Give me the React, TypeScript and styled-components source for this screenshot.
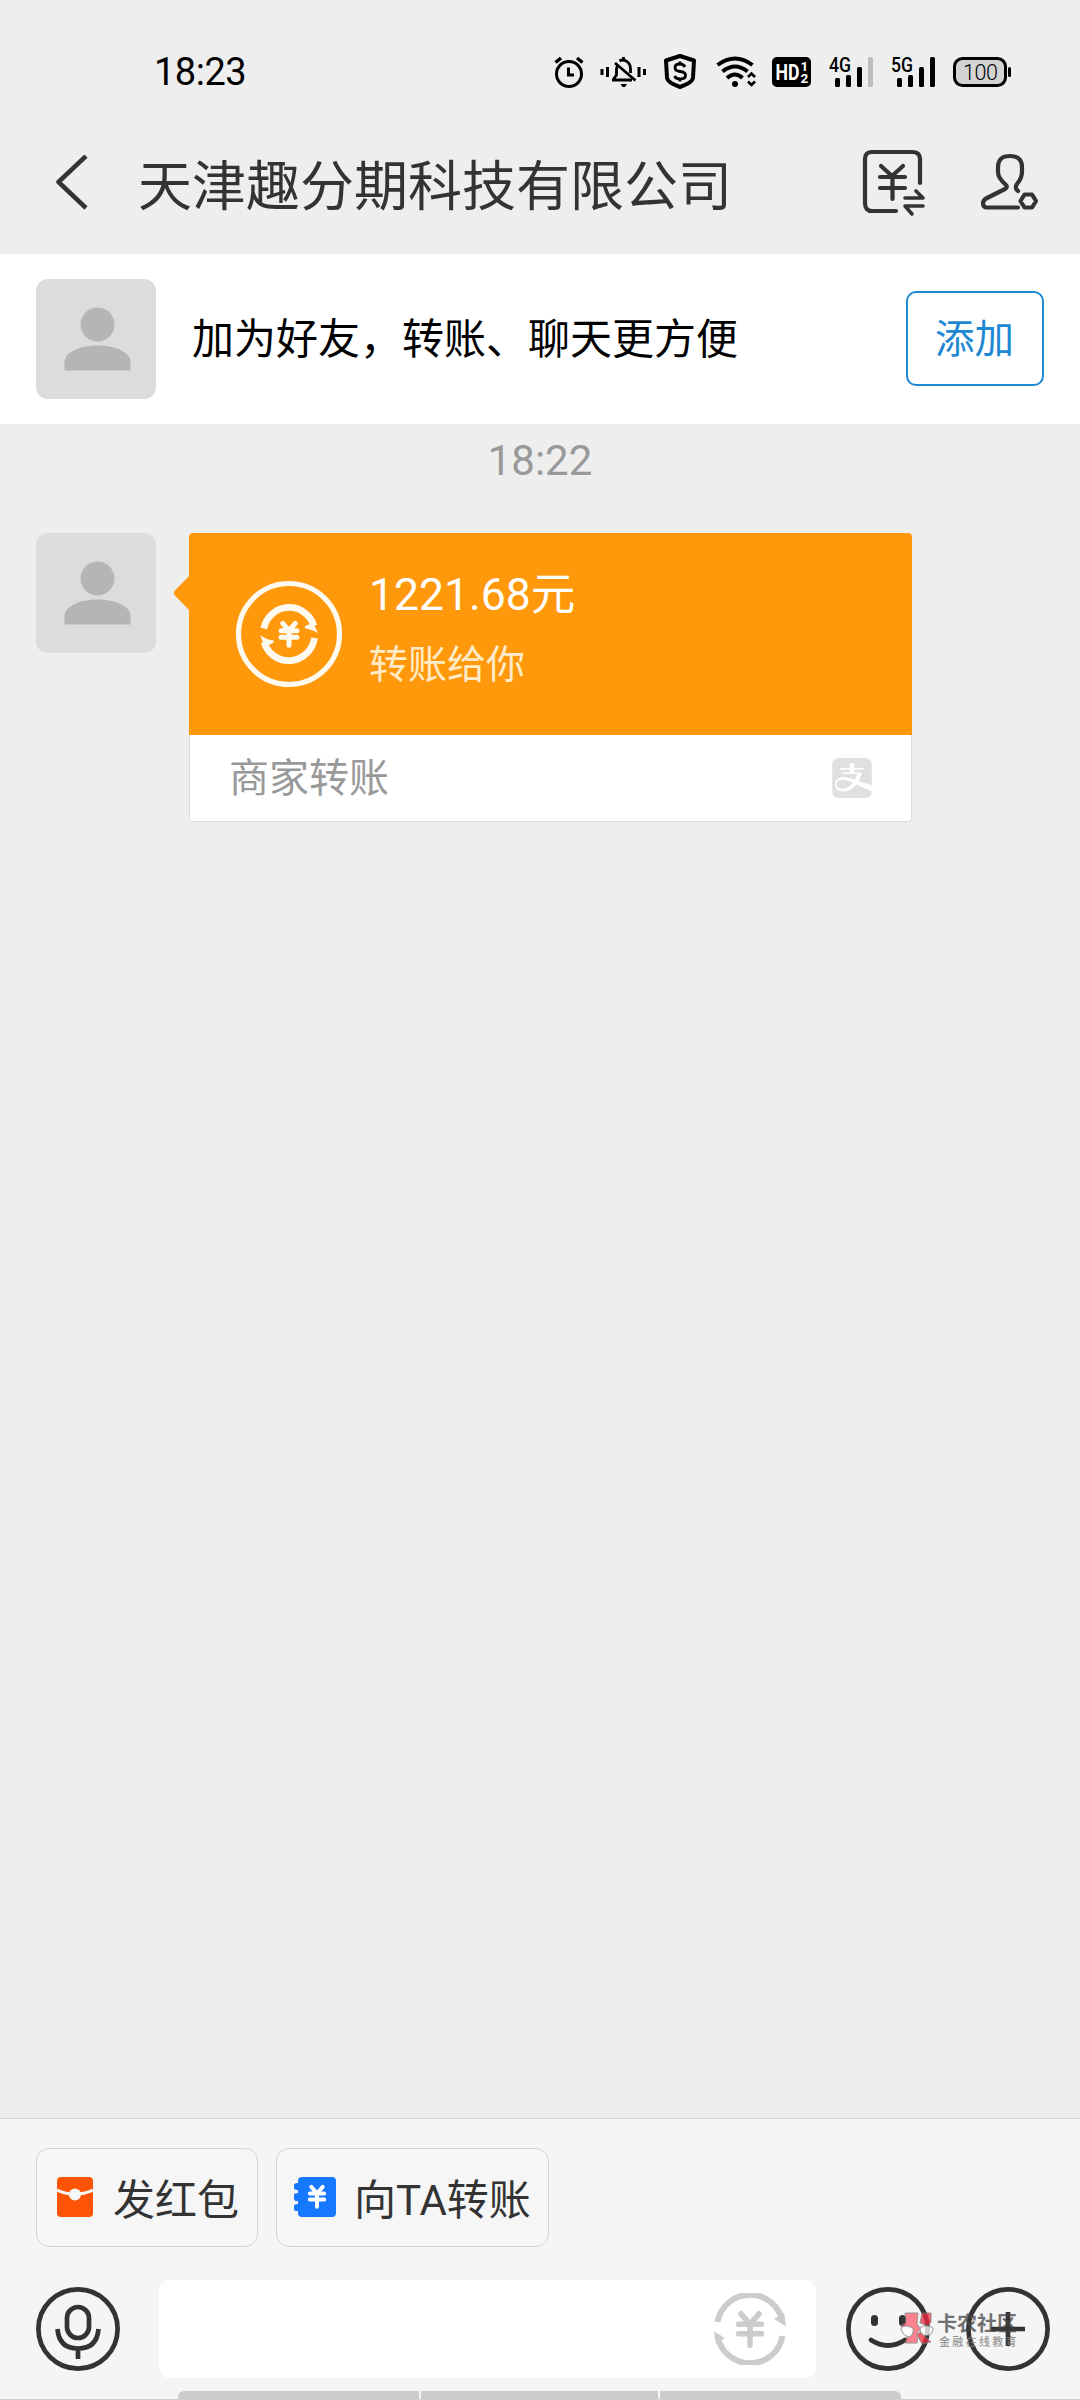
import React from "react";
import styled, { createGlobalStyle } from "styled-components";
import { SiAlipay } from "react-icons/si";

const GlobalStyle = createGlobalStyle`
  * { box-sizing: border-box; }
  html, body { margin: 0; padding: 0; background: #eeeeee; }
  body { font-family: Roboto, "Noto Sans CJK SC", sans-serif; }
  svg { display: block; flex: none; }
`;

const Screen = styled.div`
  width: 1080px;
  height: 2400px;
  overflow: hidden;
  display: flex;
  flex-direction: column;
  background: #eeeeee;
`;

const StatusBar = styled.header`
  height: 112px;
  flex: none;
  display: flex;
  align-items: center;
  padding: 34px 68px 0 154px;
`;

const Clock = styled.span`
  flex: 1;
  margin-top: -2px;
  font-family: Roboto, sans-serif;
  font-size: 38px;
  line-height: 44px;
  letter-spacing: -0.5px;
  color: #000;
`;

const StatusIcons = styled.div`
  display: flex;
  align-items: center;
`;

const StatusIcon = styled.svg<{ $gap?: number }>`
  height: 40px;
  margin-left: ${(p) => p.$gap ?? 0}px;
  overflow: visible;
`;

const NavBar = styled.nav`
  height: 142px;
  flex: none;
  display: flex;
  align-items: center;
  padding: 0 39px 0 53px;
`;

const Title = styled.h1`
  flex: 1;
  margin: 9px 0 0 49px;
  font-size: 54px;
  line-height: 80px;
  font-weight: 400;
  color: #333;
  white-space: nowrap;
`;

const NavActions = styled.div`
  display: flex;
  align-items: flex-start;
  gap: 52px;
`;

const FriendBar = styled.section`
  height: 170px;
  flex: none;
  display: flex;
  align-items: center;
  padding: 0 36px;
  background: #fff;
`;

const AvatarBox = styled.div`
  width: 120px;
  height: 120px;
  flex: none;
  border-radius: 12px;
  background: #dcdcdc;
`;

const FriendText = styled.p`
  flex: 1;
  margin: 2px 0 0 36px;
  font-size: 42px;
  line-height: 60px;
  font-weight: 400;
  color: #000;
`;

const AddButton = styled.button`
  width: 138px;
  height: 95px;
  margin-bottom: 1px;
  padding: 0 1px 5px 0;
  border: 2px solid #1e88d2;
  border-radius: 10px;
  background: #fff;
  color: #1e88d2;
  font: 400 39.5px/60px "Noto Sans CJK SC", sans-serif;
`;

const Chat = styled.main`
  flex: 1;
  display: flex;
  flex-direction: column;
`;

const TimeStamp = styled.time`
  align-self: center;
  margin-top: 11px;
  height: 98px;
  font-size: 42px;
  line-height: 52px;
  color: #999;
`;

const MessageRow = styled.div`
  display: flex;
  align-items: flex-start;
  padding-left: 36px;
`;

const Tail = styled.svg`
  margin: 43px 0 0 17px;
`;

const Card = styled.article`
  width: 723px;
  border-radius: 4px;
  overflow: hidden;
`;

const CardTop = styled.div`
  height: 202px;
  display: flex;
  align-items: center;
  padding-left: 46px;
  background: #ff980a;
`;

const CardTexts = styled.div`
  margin: -7px 0 0 26px;
`;

const Amount = styled.div`
  font-size: 44.5px;
  line-height: 69px;
  color: #fff;
`;

const Note = styled.div`
  font-size: 39px;
  line-height: 71px;
  color: #ffebc8;
`;

const CardFoot = styled.div`
  height: 87px;
  display: flex;
  align-items: center;
  justify-content: space-between;
  padding: 0 39px 1px 39px;
  background: #fff;
  border: 1px solid #d9d9d9;
  border-top: 0;
  border-radius: 0 0 4px 4px;
  font-size: 40px;
  line-height: 60px;
  color: #999;
`;

const FootLabel = styled.span`
  margin-top: 2px;
`;

const Composer = styled.footer`
  position: relative;
  height: 282px;
  flex: none;
  display: flex;
  flex-direction: column;
  background: #f5f5f5;
  border-top: 1px solid #d4d4d4;
`;

const QuickRow = styled.div`
  display: flex;
  gap: 18px;
  padding: 29px 36px 0;
`;

const QuickButton = styled.button<{ $width: number; $pad: number; $gap: number }>`
  width: ${(p) => p.$width}px;
  height: 99px;
  display: flex;
  align-items: center;
  gap: ${(p) => p.$gap}px;
  padding: 0 0 1px ${(p) => p.$pad}px;
  border: 1px solid #d4d4d4;
  border-radius: 13px;
  background: #f6f6f6;
  color: #333;
  font: 400 42px/60px Roboto, "Noto Sans CJK SC", sans-serif;
  white-space: nowrap;
`;

const QuickLabel = styled.span`
  margin-top: 7px;
`;

const InputRow = styled.div`
  display: flex;
  align-items: center;
  padding: 33px 30px 0 36px;
`;

const InputField = styled.div`
  width: 657px;
  height: 98px;
  margin: 0 30px 0 39px;
  display: flex;
  align-items: center;
  justify-content: flex-end;
  padding-right: 30px;
  border-radius: 11px;
  background: #fff;
`;

const PlusWrap = styled.div`
  margin: 0 0 1px 36px;
`;

const BottomStrip = styled.div`
  margin-top: auto;
  height: 9px;
  display: flex;
  gap: 2px;
  padding: 0 179px 0 178px;
  border-bottom: 1px solid #d0d0d0;
`;

const StripPart = styled.div<{ $width: number }>`
  width: ${(p) => p.$width}px;
  background: #cccccc;
  &:first-child { border-top-left-radius: 6px; }
  &:last-child { border-top-right-radius: 6px; }
`;

const Watermark = styled.div`
  position: absolute;
  left: 900px;
  top: 192px;
  display: flex;
  gap: 3px;
  opacity: 0.75;
`;

const MarkTitle = styled.div`
  font: 700 20px/24px "Noto Sans CJK SC", sans-serif;
  color: #444;
`;

const MarkSub = styled.div`
  margin: -2px 0 0 2px;
  font: 500 11px/16px "Noto Sans CJK SC", sans-serif;
  letter-spacing: 2.3px;
  color: #777;
`;

const Avatar = () => (
  <AvatarBox>
    <svg width="120" height="120" fill="#b5b5b5">
      <circle cx="61.5" cy="45.5" r="17" />
      <path d="M28.5 91.500V83C28.500 73 44 66.500 61.500 66.500S94.500 73 94.500 83V91.500Z" />
    </svg>
  </AvatarBox>
);

const Yen = ({ x, y, s, w, color }: { x: number; y: number; s: number; w: number; color: string }) => (
  <path
    transform={`translate(${x} ${y}) scale(${s})`}
    d="M-9.500-16L0-5L9.500-16M-12-5H12M-12 5H12M0-5V17"
    fill="none"
    stroke={color}
    strokeWidth={w / s}
    strokeLinecap="round"
    strokeLinejoin="round"
  />
);

const Signal = ({ label, weak, gap }: { label: string; weak?: boolean; gap: number }) => (
  <StatusIcon $gap={gap} width="45" viewBox="0 0 45 40">
    <text x="0" y="18.500" fontFamily="Roboto, sans-serif" fontSize="20.500" fontWeight="500" textLength="22" lengthAdjust="spacingAndGlyphs">{label}</text>
    <rect x="6" y="25" width="5" height="9" rx="1.500" />
    <rect x="17" y="22" width="5" height="12" rx="1.500" />
    <rect x="28" y="14" width="5" height="20" rx="1.500" />
    <rect x="39" y="4" width="5" height="30" rx="1.500" fill={weak ? "#bdbdbd" : "#000"} />
  </StatusIcon>
);

const SignalIcons = () => (
  <StatusIcons>
    <StatusIcon width="30" viewBox="0 0 30 40" fill="none" stroke="#000">
      <circle cx="14" cy="21" r="12.500" strokeWidth="3" />
      <path d="M.5 9.500L6 5M27.500 9.500L22 5" strokeWidth="3.500" />
      <path d="M13.500 14.500V22H19" strokeWidth="3" />
    </StatusIcon>
    <StatusIcon $gap={16} width="46" viewBox="0 0 46 40" fill="none" stroke="#000" strokeWidth="3">
      <path d="M1 16V22M6.500 14V24M38 14V24M43.500 16V22" />
      <path d="M14 10L34.500 27.500" strokeWidth="2.800" />
      <path d="M11 27H31M12.500 26L15.500 22V16Q15.500 13.500 17 12M18.500 8Q22 6 25 8Q29.500 10 29.500 16V20M22.500 4V7" strokeWidth="2.800" />
      <path d="M19.500 31H26L24 34H21.500Z" fill="#000" stroke="none" />
    </StatusIcon>
    <StatusIcon $gap={17} width="33" viewBox="0 0 33 40" fill="none" stroke="#000">
      <path d="M16 3L30 7.500L29 25Q28.500 29.500 16 34Q3.500 29.500 3 25L2 7.500Z" strokeWidth="4" strokeLinejoin="round" />
      <path d="M21 14Q19.500 11 16 11Q11 11 11 14.500Q11 18 16 18.500Q21.500 19 21.500 22.500Q21.500 26 16 26Q12 26 10.500 23M16 8.500V12M16 25V28.500" strokeWidth="2.800" />
    </StatusIcon>
    <StatusIcon $gap={20} width="40" viewBox="0 0 40 40" fill="none" stroke="#000" strokeWidth="4">
      <path d="M.5 12Q18-1 35.500 12M5.500 18.500Q18 8.500 30.500 18.500M10 25Q18 18 25.500 25" />
      <circle cx="18" cy="31" r="3" fill="#000" stroke="none" />
      <path d="M31 24L34.500 20.500L38 24M31 28.500L34.500 32L38 28.500" strokeWidth="2.600" />
    </StatusIcon>
    <StatusIcon $gap={15} width="39" viewBox="0 0 39 40">
      <rect y="4" width="39" height="30" rx="5" />
      <text x="3.500" y="27" fill="#fff" fontFamily="Roboto, sans-serif" fontWeight="700" fontSize="22" textLength="24" lengthAdjust="spacingAndGlyphs">HD</text>
      <text y="17.500" fill="#fff" fontFamily="Roboto, sans-serif" fontWeight="700" fontSize="13.500">
        <tspan x="28.500">1</tspan>
        <tspan x="28.500" dy="12">2</tspan>
      </text>
    </StatusIcon>
    <Signal gap={18} label="4G" weak />
    <Signal gap={17} label="5G" />
    <StatusIcon $gap={17} width="59" viewBox="0 0 59 40">
      <rect x="1.500" y="5.500" width="51" height="27" rx="8" fill="#d3d3d3" stroke="#000" strokeWidth="3" />
      <rect x="55" y="14" width="3" height="10" rx="1.500" />
      <text x="10" y="26.500" fontFamily="Roboto, sans-serif" fontWeight="300" fontSize="21.500" textLength="35" lengthAdjust="spacing">100</text>
    </StatusIcon>
  </StatusIcons>
);

const BackIcon = () => (
  <svg width="36" height="56" viewBox="0 0 36 56" fill="none" stroke="#333" strokeWidth="4.500">
    <path d="M33 1L5.500 27L33 53" strokeLinejoin="round" />
  </svg>
);

const TransferIcon = () => (
  <svg width="66" height="70" viewBox="0 0 66 70" fill="none" stroke="#333" strokeWidth="4.200" strokeLinecap="round" strokeLinejoin="round">
    <path d="M35 63H11Q4 63 4 55V11Q4 4 11 4H51Q59 4 59 11V35" />
    <path d="M20 18L31 28L42 18M19 29H44M19 40H44M31.500 29V51" />
    <path d="M55 43L62 50H44M62 58H44L51 66" strokeWidth="3.600" />
  </svg>
);

const ContactIcon = () => (
  <svg width="62" height="64" viewBox="0 0 62 64" fill="none" stroke="#333" strokeWidth="4.200" strokeLinecap="round" strokeLinejoin="round">
    <path d="M39 59.500H8Q4 59.500 4 55.500Q4 52 8 50L26 41Q29 39 27 37Q19 30 19 24V19Q19 8 31 8T43 19V24Q43 30 38 36Q36 39 37.500 41.500L39 43" />
    <path d="M45.500 46.500H53L57 53L53 59.500H45.500L41.500 53Z" />
  </svg>
);

const TransferBadge = () => (
  <svg width="108" height="108" viewBox="-54 -54 108 108">
    <circle r="50.500" fill="none" stroke="#fffaf0" strokeWidth="5.200" />
    <g fill="none" stroke="#fffaf0" strokeWidth="6.800">
      <path d="M-25.200-5.500A26 26.700 0 0 1 25-8M25.500 4A26 26.700 0 0 1-25 8" />
    </g>
    <path d="M16-8L24-11L29-1Q22-5 16-5.500ZM-16 9L-24 13L-29 1Q-22 6-15 6.500Z" fill="#fffaf0" />
    <Yen x={0} y={0} s={0.66} w={5} color="#fffaf0" />
  </svg>
);

const InputTransferIcon = () => (
  <svg width="72" height="72" viewBox="-36 -36 72 72">
    <path d="M-32.500-7A33 33 0 0 1 32.500-7M32.500 7A33 33 0 0 1-32.500 7" fill="none" stroke="#cccccc" strokeWidth="6" />
    <path d="M24-10L34-16L36-2.500ZM-25 9L-34 15L-36 2.500Z" fill="#cccccc" />
    <Yen x={0} y={0} s={0.95} w={5.6} color="#cccccc" />
  </svg>
);

const MicIcon = () => (
  <svg width="84" height="84" viewBox="-42 -42 84 84" fill="none" stroke="#333" strokeWidth="4.700">
    <circle r="39.600" />
    <rect x="-11" y="-22" width="22" height="31" rx="11" />
    <path d="M-20.500 0Q-19 19.500 0 19.500T20.500 0M0 19V30" />
  </svg>
);

const SmileIcon = () => (
  <svg width="84" height="84" viewBox="-42 -42 84 84" fill="none" stroke="#333" strokeWidth="4.700" strokeLinecap="round">
    <circle r="39.600" />
    <path d="M-13.500-10.500V-6.500M14.500-10.500V-6.500" strokeWidth="7" />
    <path d="M-17 11Q0 22 17 11" />
  </svg>
);

const PlusIcon = () => (
  <svg width="84" height="84" viewBox="-42 -42 84 84" fill="none" stroke="#333" strokeWidth="4.700">
    <circle r="39.600" />
    <path d="M-17 0H17M0-17V17" />
  </svg>
);

const RedPacketIcon = () => (
  <svg width="36" height="40" viewBox="0 0 36 40">
    <rect width="36" height="40" rx="4" fill="#fc5404" />
    <path d="M0 13Q18 21 36 13" fill="none" stroke="#f6f6f6" strokeWidth="3" />
    <circle cx="18" cy="17.500" r="6" fill="#f6f6f6" />
  </svg>
);

const LedgerIcon = () => (
  <svg width="42" height="40" viewBox="0 0 42 40">
    <path d="M8 0H38Q42 0 42 4V36Q42 40 38 40H8Q4 40 4 36V34H2Q0 34 0 32V29Q0 27 4 27V24H2Q0 24 0 22V18Q0 16 4 16V13Q0 13 0 11V8Q0 6 4 6V4Q4 0 8 0Z" fill="#1677ff" />
    <Yen x={23} y={19.5} s={0.6} w={4} color="#fff" />
  </svg>
);

const MarkLogo = () => (
  <svg width="34" height="36" viewBox="0 0 34 36" stroke="#777" strokeWidth="1">
    <path d="M5 2H18L17 13L21 18L17 22L18 24L17 32H5L8 24L1 15L6 11Z" fill="#ff5a6c" />
    <path d="M22 2H31V11L28 15L20 12ZM20 21L31 31L22 33L17 24Z" fill="#f4293f" />
    <path d="M1 17Q4 13 13 17Q14 24 9 26Q2 24 1 17ZM20 17Q27 12 33 17Q33 24 26 25Q20 23 20 17Z" fill="#fff" />
  </svg>
);

export default function App() {
  return (
    <Screen>
      <GlobalStyle />
      <StatusBar>
        <Clock>18:23</Clock>
        <SignalIcons />
      </StatusBar>
      <NavBar>
        <BackIcon />
        <Title>天津趣分期科技有限公司</Title>
        <NavActions>
          <TransferIcon />
          <ContactIcon />
        </NavActions>
      </NavBar>
      <FriendBar>
        <Avatar />
        <FriendText>加为好友，转账、聊天更方便</FriendText>
        <AddButton>添加</AddButton>
      </FriendBar>
      <Chat>
        <TimeStamp>18:22</TimeStamp>
        <MessageRow>
          <Avatar />
          <Tail width="16" height="34" viewBox="0 0 16 34">
            <path d="M16 0V34L1.500 19Q0 17 1.500 15Z" fill="#ff980a" />
          </Tail>
          <Card>
            <CardTop>
              <TransferBadge />
              <CardTexts>
                <Amount>1221.68元</Amount>
                <Note>转账给你</Note>
              </CardTexts>
            </CardTop>
            <CardFoot>
              <FootLabel>商家转账</FootLabel>
              <SiAlipay size={40} color="#e0e0e0" />
            </CardFoot>
          </Card>
        </MessageRow>
      </Chat>
      <Composer>
        <QuickRow>
          <QuickButton $width={222} $pad={20} $gap={20}>
            <RedPacketIcon />
            <QuickLabel>发红包</QuickLabel>
          </QuickButton>
          <QuickButton $width={273} $pad={17} $gap={18}>
            <LedgerIcon />
            <QuickLabel>向TA转账</QuickLabel>
          </QuickButton>
        </QuickRow>
        <InputRow>
          <MicIcon />
          <InputField>
            <InputTransferIcon />
          </InputField>
          <SmileIcon />
          <PlusWrap>
            <PlusIcon />
          </PlusWrap>
        </InputRow>
        <BottomStrip>
          <StripPart $width={241} />
          <StripPart $width={237} />
          <StripPart $width={241} />
        </BottomStrip>
        <Watermark>
          <MarkLogo />
          <div>
            <MarkTitle>卡农社区</MarkTitle>
            <MarkSub>金融在线教育</MarkSub>
          </div>
        </Watermark>
      </Composer>
    </Screen>
  );
}
